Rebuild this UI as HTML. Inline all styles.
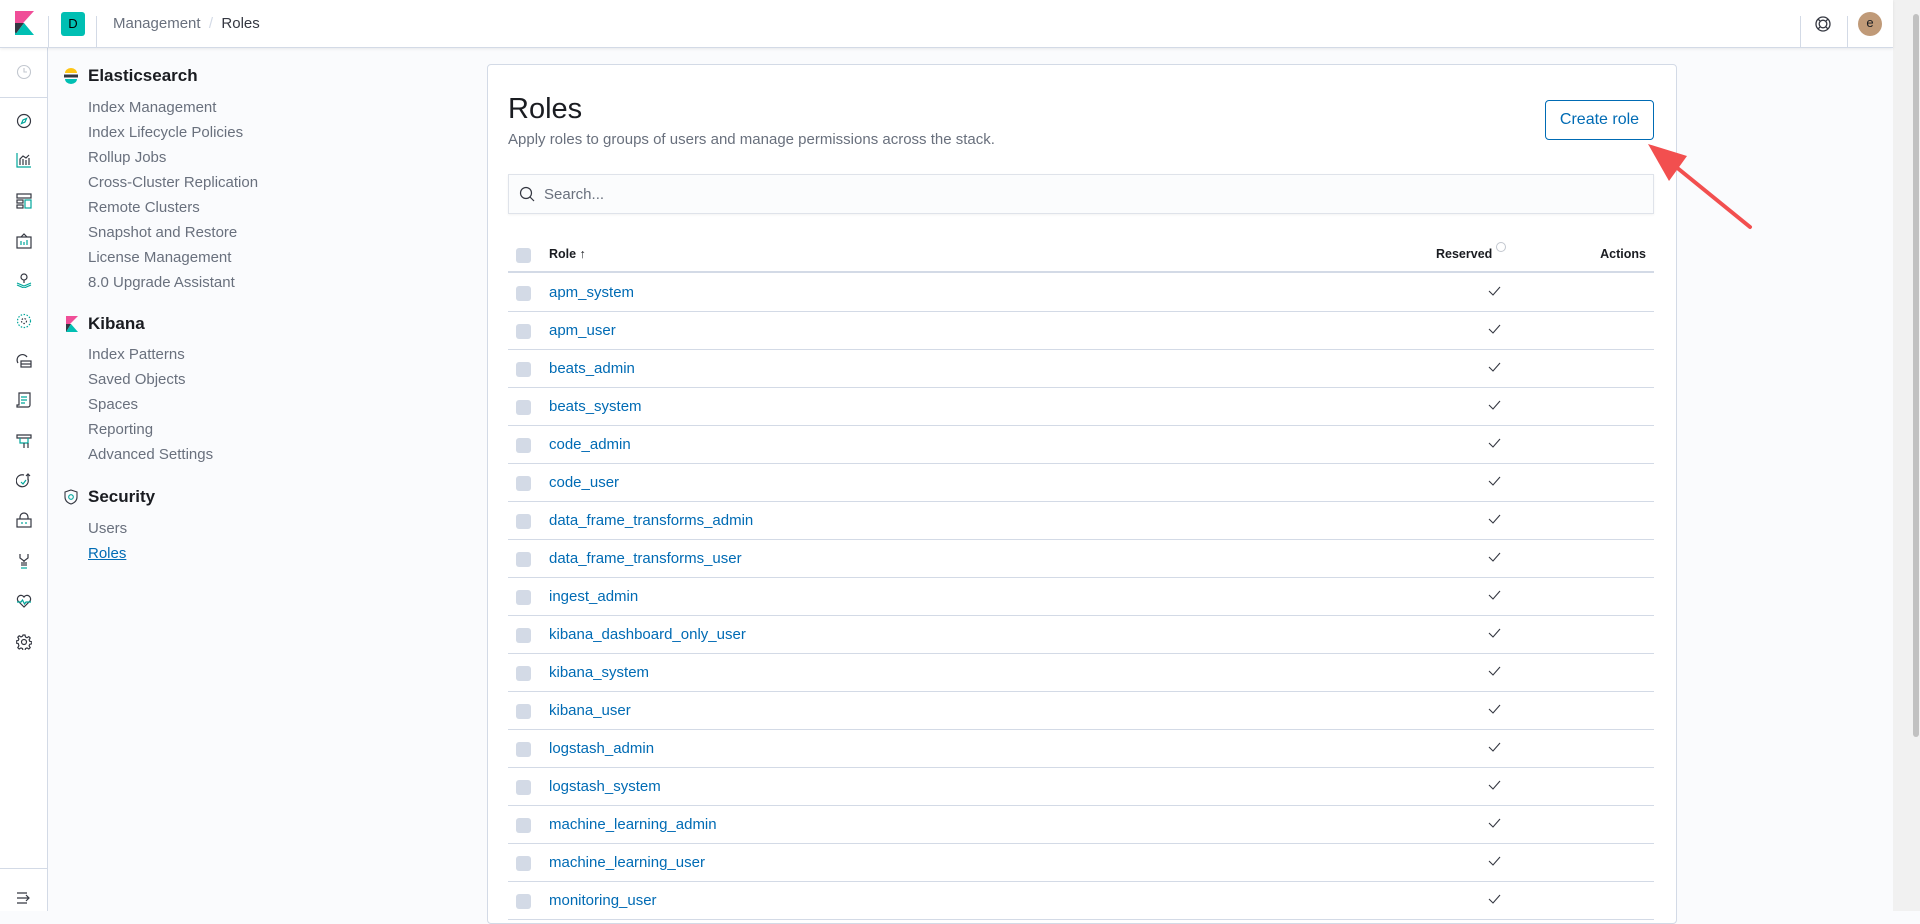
<!DOCTYPE html>
<html><head><meta charset="utf-8"><style>
*{box-sizing:border-box;margin:0;padding:0;white-space:nowrap}
body{width:1920px;height:911px;overflow:hidden;background:#fafbfd;font-family:"Liberation Sans",sans-serif;position:relative;color:#343741}
.hdr{position:absolute;left:0;top:0;width:1893px;height:48px;background:#fff;border-bottom:1px solid #d3dae6;box-shadow:0 1px 3px rgba(0,0,0,.08);z-index:3}
.vl{position:absolute;top:16px;width:1px;height:32px;background:#d3dae6}
.nav{position:absolute;left:0;top:48px;width:48px;height:863px;background:#fff;border-right:1px solid #d3dae6;z-index:2}
.nav svg{position:absolute;left:16px}
.side{position:absolute;left:48px;top:48px;width:400px;height:600px}
.st{position:absolute;left:40px;font-size:17px;font-weight:bold;color:#1a1c21}
.si{position:absolute;left:40px;font-size:15px;color:#69707d}
.panel{position:absolute;left:487px;top:64px;width:1190px;height:860px;background:#fff;border:1px solid #d3dae6;border-radius:4px}
.row{position:absolute;left:20px;width:1146px;height:38px;border-bottom:1px solid #d3dae6}
.cb{position:absolute;left:8px;top:12px;width:15px;height:15px;border-radius:3px;background:#d3dae6}
.rn{position:absolute;left:41px;top:10px;font-size:15px;color:#006bb4}
.ck{position:absolute;left:980px;top:12px}
.sb{position:absolute;left:1893px;top:0;width:27px;height:911px;background:#f1f1f1}
</style></head><body>
<div class="hdr">
 <svg style="position:absolute;left:15px;top:11px" width="19" height="24" viewBox="0 0 19 24"><polygon points="0,0 19,0 0,21" fill="#f04e98"/><polygon points="0,12 9,12 0,24" fill="#343741"/><polygon points="0,24 9,12 19,24" fill="#00bfb3"/><polygon points="0,21 0,24 2,24" fill="#00bfb3"/></svg>
 <div class="vl" style="left:48px"></div>
 <div style="position:absolute;left:61px;top:12px;width:24px;height:24px;border-radius:3px;background:#00bfb3;color:#000;font-size:13px;text-align:center;line-height:24px">D</div>
 <div class="vl" style="left:96px"></div>
 <div style="position:absolute;left:113px;top:15px;font-size:15px;color:#69707d">Management <span style="color:#d3dae6">&nbsp;/&nbsp;</span> <span style="color:#343741">Roles</span></div>
 <div class="vl" style="left:1800px"></div>
 <svg style="position:absolute;left:1815px;top:16px" width="16" height="16" viewBox="0 0 16 16" fill="none" stroke="#343741" stroke-width="1.3"><circle cx="8" cy="8" r="7"/><circle cx="8" cy="8" r="3.8"/><path d="M3 3l2.3 2.3M13 3l-2.3 2.3M3 13l2.3-2.3M13 13l-2.3-2.3"/></svg>
 <div class="vl" style="left:1847px"></div>
 <div style="position:absolute;left:1858px;top:12px;width:24px;height:24px;border-radius:50%;background:#c09a78;color:#1a1c21;font-size:13px;text-align:center;line-height:22px">e</div>
</div>
<div class="nav">
 <svg style="top:16px" width="16" height="16" viewBox="0 0 16 16" fill="none" stroke="#c2c7cf" stroke-width="1.1"><circle cx="8" cy="8" r="6.5"/><path d="M8 4v4h3"/></svg>
 <div style="position:absolute;left:0;top:49px;width:48px;height:1px;background:#d3dae6"></div>
 <svg style="top:65px" width="16" height="16" viewBox="0 0 16 16" fill="none" stroke="#343741" stroke-width="1.2"><circle cx="8" cy="8" r="6.5"/><path d="M10.5 5.5L9 9 5.5 10.5 7 7z" stroke="#00a69b"/></svg>
 <svg style="top:104px" width="16" height="16" viewBox="0 0 16 16" fill="none" stroke="#343741" stroke-width="1.2"><path d="M1 1v14h14" stroke="#00a69b"/><path d="M4 13V7l3-3 3 2 3-3M4 13V8M7 13V7M10 13V8M13 13V6"/></svg>
 <svg style="top:145px" width="16" height="16" viewBox="0 0 16 16" fill="none" stroke="#343741" stroke-width="1.2"><rect x="1" y="1" width="14" height="4"/><rect x="1" y="7" width="6" height="3"/><rect x="1" y="12" width="6" height="3"/><rect x="9" y="7" width="6" height="8" stroke="#00a69b"/></svg>
 <svg style="top:185px" width="16" height="16" viewBox="0 0 16 16" fill="none" stroke="#343741" stroke-width="1.2"><rect x="1" y="4" width="14" height="11"/><path d="M5 4l3-3 3 3"/><path d="M5 8v4M8 9v3M11 7v5" stroke="#00a69b"/></svg>
 <svg style="top:224px" width="16" height="16" viewBox="0 0 16 16" fill="none" stroke="#343741" stroke-width="1.2"><circle cx="8" cy="5" r="3"/><path d="M8 8v3"/><path d="M1 11l7 3 7-3M1 13l7 3 7-3" stroke="#00a69b"/></svg>
 <svg style="top:265px" width="16" height="16" viewBox="0 0 16 16" fill="none" stroke="#00a69b" stroke-width="1.2" stroke-dasharray="1.5 1.5"><circle cx="8" cy="8" r="6.5"/><circle cx="8" cy="8" r="2.5" stroke="#343741"/></svg>
 <svg style="top:305px" width="16" height="16" viewBox="0 0 16 16" fill="none" stroke="#343741" stroke-width="1.2"><path d="M2 10a5 5 0 0 1 9-6"/><rect x="5" y="8" width="10" height="6"/><path d="M5 11h10"/></svg>
 <svg style="top:344px" width="16" height="16" viewBox="0 0 16 16" fill="none" stroke="#343741" stroke-width="1.2"><path d="M3 1h11v12a2 2 0 0 1-2 2H1v-2h2z"/><path d="M5 5h6M5 8h6M5 11h4" stroke="#00a69b"/></svg>
 <svg style="top:385px" width="16" height="16" viewBox="0 0 16 16" fill="none" stroke="#343741" stroke-width="1.2"><path d="M1 2h14v3H1z"/><path d="M4 5v5h8V5" stroke="#00a69b"/><path d="M8 10v5M12 10v5"/></svg>
 <svg style="top:425px" width="16" height="16" viewBox="0 0 16 16" fill="none" stroke="#343741" stroke-width="1.2"><path d="M12 6a6 6 0 1 1-4-4"/><path d="M12 1v6M10 3l2-2 2 2"/><path d="M5 9l2 2 3-4" stroke="#00a69b"/></svg>
 <svg style="top:464px" width="16" height="16" viewBox="0 0 16 16" fill="none" stroke="#343741" stroke-width="1.2"><rect x="1" y="7" width="14" height="8"/><path d="M4 7V5a4 4 0 0 1 8 0v2"/><path d="M6 10v2M10 10v2" stroke="#00a69b"/></svg>
 <svg style="top:505px" width="16" height="16" viewBox="0 0 16 16" fill="none" stroke="#343741" stroke-width="1.2"><path d="M4 1v4l4 3 4-3V1M8 8v5M6 9v4M10 9v4"/><path d="M5 15h6" stroke="#00a69b"/></svg>
 <svg style="top:545px" width="16" height="16" viewBox="0 0 16 16" fill="none" stroke="#343741" stroke-width="1.2"><path d="M8 14L2 8a3.5 3.5 0 0 1 6-4 3.5 3.5 0 0 1 6 4z"/><path d="M1 9h4l1.5-2 2 4 1.5-2h5" stroke="#00a69b"/></svg>
 <svg style="top:586px" width="16" height="16" viewBox="0 0 16 16" fill="none" stroke="#343741" stroke-width="1.2"><circle cx="8" cy="8" r="2.5"/><path d="M7 1h2l.5 2 1.5.7 1.8-1.1 1.4 1.4-1.1 1.8.7 1.5 2 .5v2l-2 .5-.7 1.5 1.1 1.8-1.4 1.4-1.8-1.1-1.5.7-.5 2H7l-.5-2-1.5-.7-1.8 1.1-1.4-1.4 1.1-1.8L2.2 9.5.2 9V7l2-.5.7-1.5-1.1-1.8 1.4-1.4 1.8 1.1 1.5-.7z"/></svg>
 <div style="position:absolute;left:0;top:820px;width:48px;height:1px;background:#d3dae6"></div>
 <svg style="top:843px" width="16" height="14" viewBox="0 0 16 14" fill="none" stroke="#343741" stroke-width="1.2"><path d="M1 2h10M1 7h11M1 12h10M10 4l3 3-3 3"/></svg>
</div>
<div class="side">
 <svg style="position:absolute;left:16px;top:20px" width="14" height="16" viewBox="0 0 14 16"><path d="M1 5a6 5 0 0 1 12 0z" fill="#fec514"/><rect x="0" y="6.5" width="14" height="3" fill="#343741"/><path d="M1 11h12a6 5 0 0 1-12 0z" fill="#00bfb3"/></svg>
 <div class="st" style="top:18px">Elasticsearch</div>
 <div class="si" style="top:51px">Index Management</div>
 <div class="si" style="top:76px">Index Lifecycle Policies</div>
 <div class="si" style="top:101px">Rollup Jobs</div>
 <div class="si" style="top:126px">Cross-Cluster Replication</div>
 <div class="si" style="top:151px">Remote Clusters</div>
 <div class="si" style="top:176px">Snapshot and Restore</div>
 <div class="si" style="top:201px">License Management</div>
 <div class="si" style="top:226px">8.0 Upgrade Assistant</div>
 <svg style="position:absolute;left:18px;top:268px" width="12" height="16" viewBox="0 0 12 16"><polygon points="0,0 12,0 0,12" fill="#f04e98"/><polygon points="0,8 5,8 0,16" fill="#343741"/><polygon points="0,16 5,8 12,16" fill="#00bfb3"/></svg>
 <div class="st" style="top:266px">Kibana</div>
 <div class="si" style="top:298px">Index Patterns</div>
 <div class="si" style="top:323px">Saved Objects</div>
 <div class="si" style="top:348px">Spaces</div>
 <div class="si" style="top:373px">Reporting</div>
 <div class="si" style="top:398px">Advanced Settings</div>
 <svg style="position:absolute;left:16px;top:441px" width="14" height="16" viewBox="0 0 14 16" fill="none" stroke="#343741" stroke-width="1.1"><path d="M7 1l6 2v5c0 4-3 6-6 7-3-1-6-3-6-7V3z"/><circle cx="7" cy="8" r="2.3" stroke="#00a69b"/></svg>
 <div class="st" style="top:439px">Security</div>
 <div class="si" style="top:472px">Users</div>
 <div class="si" style="top:497px;color:#006bb4;text-decoration:underline">Roles</div>
</div>
<div class="panel">
 <div style="position:absolute;left:20px;top:28px;font-size:29px;color:#1a1c21">Roles</div>
 <div style="position:absolute;left:20px;top:66px;font-size:15px;color:#69707d">Apply roles to groups of users and manage permissions across the stack.</div>
 <div style="position:absolute;left:1057px;top:35px;width:109px;height:40px;border:1px solid #006bb4;border-radius:4px;color:#006bb4;font-size:16px;text-align:center;line-height:38px">Create role</div>
 <div style="position:absolute;left:20px;top:109px;width:1146px;height:40px;background:#fbfcfd;border:1px solid #dfe3ea;box-shadow:0 1px 2px rgba(0,0,0,.05)">
  <svg style="position:absolute;left:10px;top:11px" width="16" height="16" viewBox="0 0 16 16" fill="none" stroke="#343741" stroke-width="1.2"><circle cx="7" cy="7" r="5.5"/><path d="M11 11l4 4"/></svg>
  <div style="position:absolute;left:35px;top:11px;font-size:15px;color:#69707d">Search...</div>
 </div>
 <div class="row" style="top:170px;height:38px;border-bottom:2px solid #d3dae6">
  <div class="cb" style="top:13px"></div>
  <div style="position:absolute;left:41px;top:12px;font-size:12.5px;font-weight:bold;color:#1a1c21">Role &#8593;</div>
  <div style="position:absolute;left:928px;top:12px;font-size:12.5px;font-weight:bold;color:#1a1c21">Reserved</div>
  <div style="position:absolute;left:988px;top:7px;width:10px;height:10px;border:1px solid #c2c7cf;border-radius:50%"></div>
  <div style="position:absolute;right:8px;top:12px;font-size:12.5px;font-weight:bold;color:#1a1c21">Actions</div>
 </div>
 <div class="row" style="top:209px"><div class="cb"></div><div class="rn">apm_system</div><svg class="ck" width="13" height="10" viewBox="0 0 13 10" fill="none" stroke="#343741" stroke-width="1.1"><path d="M1 5l4 4 7-8"/></svg></div>
 <div class="row" style="top:247px"><div class="cb"></div><div class="rn">apm_user</div><svg class="ck" width="13" height="10" viewBox="0 0 13 10" fill="none" stroke="#343741" stroke-width="1.1"><path d="M1 5l4 4 7-8"/></svg></div>
 <div class="row" style="top:285px"><div class="cb"></div><div class="rn">beats_admin</div><svg class="ck" width="13" height="10" viewBox="0 0 13 10" fill="none" stroke="#343741" stroke-width="1.1"><path d="M1 5l4 4 7-8"/></svg></div>
 <div class="row" style="top:323px"><div class="cb"></div><div class="rn">beats_system</div><svg class="ck" width="13" height="10" viewBox="0 0 13 10" fill="none" stroke="#343741" stroke-width="1.1"><path d="M1 5l4 4 7-8"/></svg></div>
 <div class="row" style="top:361px"><div class="cb"></div><div class="rn">code_admin</div><svg class="ck" width="13" height="10" viewBox="0 0 13 10" fill="none" stroke="#343741" stroke-width="1.1"><path d="M1 5l4 4 7-8"/></svg></div>
 <div class="row" style="top:399px"><div class="cb"></div><div class="rn">code_user</div><svg class="ck" width="13" height="10" viewBox="0 0 13 10" fill="none" stroke="#343741" stroke-width="1.1"><path d="M1 5l4 4 7-8"/></svg></div>
 <div class="row" style="top:437px"><div class="cb"></div><div class="rn">data_frame_transforms_admin</div><svg class="ck" width="13" height="10" viewBox="0 0 13 10" fill="none" stroke="#343741" stroke-width="1.1"><path d="M1 5l4 4 7-8"/></svg></div>
 <div class="row" style="top:475px"><div class="cb"></div><div class="rn">data_frame_transforms_user</div><svg class="ck" width="13" height="10" viewBox="0 0 13 10" fill="none" stroke="#343741" stroke-width="1.1"><path d="M1 5l4 4 7-8"/></svg></div>
 <div class="row" style="top:513px"><div class="cb"></div><div class="rn">ingest_admin</div><svg class="ck" width="13" height="10" viewBox="0 0 13 10" fill="none" stroke="#343741" stroke-width="1.1"><path d="M1 5l4 4 7-8"/></svg></div>
 <div class="row" style="top:551px"><div class="cb"></div><div class="rn">kibana_dashboard_only_user</div><svg class="ck" width="13" height="10" viewBox="0 0 13 10" fill="none" stroke="#343741" stroke-width="1.1"><path d="M1 5l4 4 7-8"/></svg></div>
 <div class="row" style="top:589px"><div class="cb"></div><div class="rn">kibana_system</div><svg class="ck" width="13" height="10" viewBox="0 0 13 10" fill="none" stroke="#343741" stroke-width="1.1"><path d="M1 5l4 4 7-8"/></svg></div>
 <div class="row" style="top:627px"><div class="cb"></div><div class="rn">kibana_user</div><svg class="ck" width="13" height="10" viewBox="0 0 13 10" fill="none" stroke="#343741" stroke-width="1.1"><path d="M1 5l4 4 7-8"/></svg></div>
 <div class="row" style="top:665px"><div class="cb"></div><div class="rn">logstash_admin</div><svg class="ck" width="13" height="10" viewBox="0 0 13 10" fill="none" stroke="#343741" stroke-width="1.1"><path d="M1 5l4 4 7-8"/></svg></div>
 <div class="row" style="top:703px"><div class="cb"></div><div class="rn">logstash_system</div><svg class="ck" width="13" height="10" viewBox="0 0 13 10" fill="none" stroke="#343741" stroke-width="1.1"><path d="M1 5l4 4 7-8"/></svg></div>
 <div class="row" style="top:741px"><div class="cb"></div><div class="rn">machine_learning_admin</div><svg class="ck" width="13" height="10" viewBox="0 0 13 10" fill="none" stroke="#343741" stroke-width="1.1"><path d="M1 5l4 4 7-8"/></svg></div>
 <div class="row" style="top:779px"><div class="cb"></div><div class="rn">machine_learning_user</div><svg class="ck" width="13" height="10" viewBox="0 0 13 10" fill="none" stroke="#343741" stroke-width="1.1"><path d="M1 5l4 4 7-8"/></svg></div>
 <div class="row" style="top:817px"><div class="cb"></div><div class="rn">monitoring_user</div><svg class="ck" width="13" height="10" viewBox="0 0 13 10" fill="none" stroke="#343741" stroke-width="1.1"><path d="M1 5l4 4 7-8"/></svg></div>
</div>
<svg style="position:absolute;left:0;top:0;z-index:4" width="1920" height="911"><line x1="1750" y1="227" x2="1670" y2="162" stroke="#f24f4f" stroke-width="4" stroke-linecap="round"/><polygon points="1648,144 1687,156 1669,181" fill="#f24f4f"/></svg>
<div class="sb"><div style="position:absolute;left:20px;top:14px;width:6px;height:723px;background:#c1c1c1;border-radius:3px"></div></div>
</body></html>
